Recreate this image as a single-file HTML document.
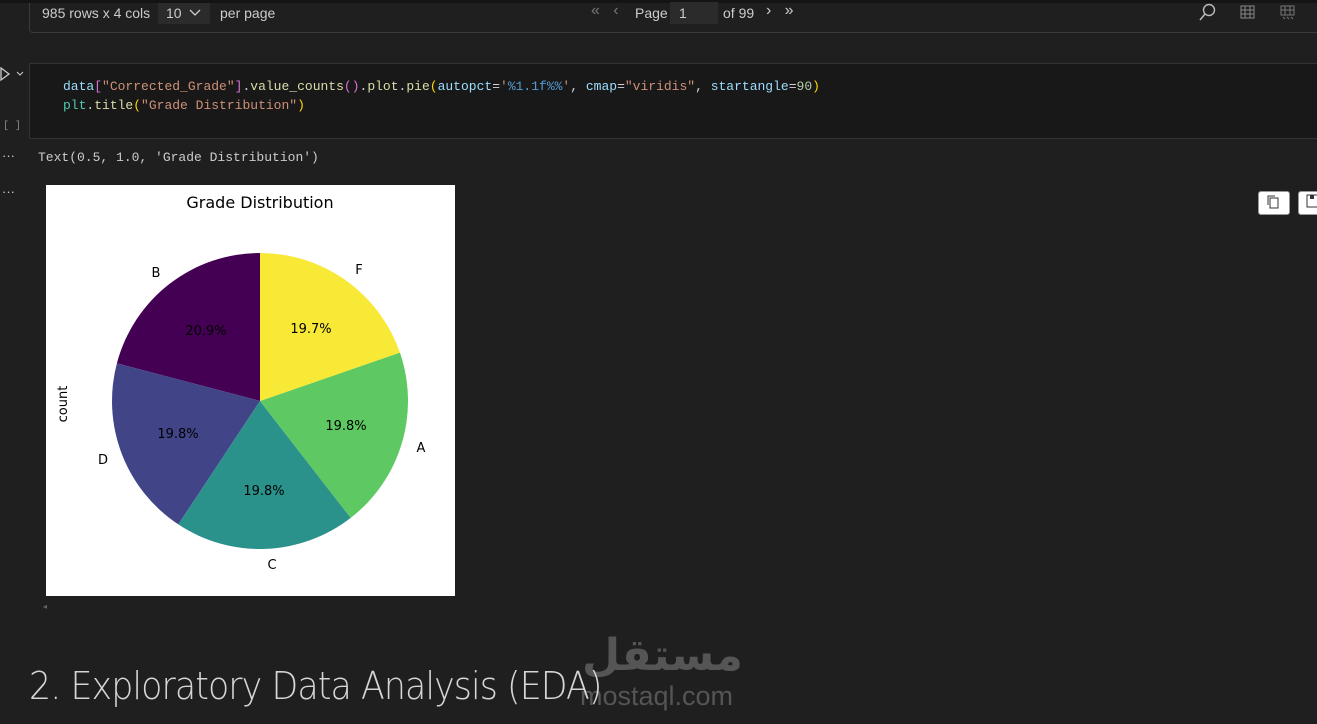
<!DOCTYPE html>
<html><head><meta charset="utf-8"><style>
body{margin:0;width:1317px;height:724px;background:#1f1f1f;overflow:hidden;position:relative;font-family:"Liberation Sans",sans-serif;color:#ccc}
.abs{position:absolute}
.mono{font-family:"Liberation Mono","DejaVu Sans Mono",monospace;font-size:13px}
</style></head><body>
<div class="abs" style="left:0;top:0;width:1317px;height:3px;background:#141414"></div>
<div class="abs" style="left:29px;top:3px;width:1300px;height:29px;border:1px solid #3a3a3a;border-top:none;border-radius:0 0 0 4px"></div>
<div class="abs" style="left:42px;top:5px;font-size:14px;color:#ccc">985 rows x 4 cols</div>
<div class="abs" style="left:158px;top:3px;width:52px;height:21px;background:#2b2b2b"></div>
<div class="abs" style="left:166px;top:5px;font-size:14px;color:#ccc">10</div>
<svg class="abs" style="left:188px;top:7px" width="14" height="10"><path d="M2 3l5 5 5-5" stroke="#ccc" fill="none" stroke-width="1.3"/></svg>
<div class="abs" style="left:220px;top:5px;font-size:14px">per page</div>
<div class="abs" style="left:591px;top:2px;font-size:16px;color:#777">«&nbsp;&nbsp; ‹</div>
<div class="abs" style="left:635px;top:5px;font-size:14px">Page</div>
<div class="abs" style="left:670px;top:2px;width:48px;height:22px;background:#2b2b2b"></div>
<div class="abs" style="left:679px;top:5px;font-size:14px">1</div>
<div class="abs" style="left:723px;top:5px;font-size:14px">of 99</div>
<div class="abs" style="left:766px;top:2px;font-size:16px;color:#ccc">›&nbsp;&nbsp; »</div>
<svg class="abs" style="left:1198px;top:2px" width="20" height="20"><circle cx="11" cy="8" r="5.5" stroke="#bbb" fill="none" stroke-width="1.4"/><path d="M7 12l-5 6" stroke="#bbb" stroke-width="1.5"/></svg>
<svg class="abs" style="left:1240px;top:5px" width="15" height="14"><rect x="1" y="1" width="13" height="12" fill="none" stroke="#888"/><path d="M1 5h13M1 9h13M5 1v12M10 1v12" stroke="#888"/></svg>
<svg class="abs" style="left:1280px;top:5px" width="16" height="16"><rect x="1" y="1" width="13" height="9" fill="none" stroke="#777"/><path d="M1 5h13M5 1v9M10 1v9M3 12l2 2M7 12l2 2M11 12l2 2" stroke="#777"/></svg>

<div class="abs" style="left:29px;top:63px;width:1300px;height:74px;background:#181818;border:1px solid #333"></div>
<svg class="abs" style="left:0;top:67px" width="28" height="16"><path d="M1 1l8 6-8 6z" stroke="#ccc" fill="none" stroke-width="1.3"/><path d="M17 5l3 3 3-3" stroke="#ccc" fill="none"/></svg>
<div class="abs mono" style="left:3px;top:121px;font-size:10px;color:#888">[ ]</div>
<div class="abs mono" style="left:63px;top:77px;line-height:19px;white-space:pre;color:#d4d4d4"><span style="color:#9cdcfe">data</span><span style="color:#da70d6">[</span><span style="color:#ce9178">"Corrected_Grade"</span><span style="color:#da70d6">]</span>.<span style="color:#dcdcaa">value_counts</span><span style="color:#da70d6">()</span>.<span style="color:#dcdcaa">plot</span>.<span style="color:#dcdcaa">pie</span><span style="color:#ffd700">(</span><span style="color:#9cdcfe">autopct</span>=<span style="color:#ce9178">'</span><span style="color:#569cd6">%1.1f%%</span><span style="color:#ce9178">'</span>, <span style="color:#9cdcfe">cmap</span>=<span style="color:#ce9178">"viridis"</span>, <span style="color:#9cdcfe">startangle</span>=<span style="color:#b5cea8">90</span><span style="color:#ffd700">)</span>
<span style="color:#4ec9b0">plt</span>.<span style="color:#dcdcaa">title</span><span style="color:#ffd700">(</span><span style="color:#ce9178">"Grade Distribution"</span><span style="color:#ffd700">)</span></div>
<div class="abs" style="left:2px;top:148px;font-size:13px;color:#ccc">···</div>
<div class="abs mono" style="left:38px;top:150px;color:#ccc">Text(0.5, 1.0, 'Grade Distribution')</div>
<div class="abs" style="left:2px;top:184px;font-size:13px;color:#ccc">···</div>

<svg class="abs" style="left:46px;top:185px" width="409" height="411" viewBox="46 185 409 411" font-family="DejaVu Sans, sans-serif" font-size="13">
<rect x="46" y="185" width="409" height="411" fill="#fff"/>
<text x="260" y="208" text-anchor="middle" font-size="16">Grade Distribution</text>
<path d="M260 401L260 253A148 148 0 0 0 116.9 363.3Z" fill="#440154"/>
<path d="M260 401L116.9 363.3A148 148 0 0 0 178.3 524.4Z" fill="#414487"/>
<path d="M260 401L178.3 524.4A148 148 0 0 0 350.7 517.9Z" fill="#2a918b"/>
<path d="M260 401L350.7 517.9A148 148 0 0 0 399.9 352.6Z" fill="#5ec962"/>
<path d="M260 401L399.9 352.6A148 148 0 0 0 260 253Z" fill="#f7e935"/>
<text x="206" y="335" text-anchor="middle">20.9%</text>
<text x="311" y="333" text-anchor="middle">19.7%</text>
<text x="346" y="430" text-anchor="middle">19.8%</text>
<text x="178" y="438" text-anchor="middle">19.8%</text>
<text x="264" y="495" text-anchor="middle">19.8%</text>
<text x="156" y="277" text-anchor="middle">B</text>
<text x="359" y="274" text-anchor="middle">F</text>
<text x="421" y="452" text-anchor="middle">A</text>
<text x="103" y="464" text-anchor="middle">D</text>
<text x="272" y="569" text-anchor="middle">C</text>
<text transform="translate(67 404) rotate(-90)" text-anchor="middle">count</text>
</svg>
<div class="abs" style="left:1258px;top:191px;width:30px;height:22px;background:#fff;border-radius:3px;border:1px solid #999"></div>
<svg class="abs" style="left:1266px;top:194px" width="14" height="16"><rect x="4" y="4" width="8" height="10" fill="none" stroke="#333"/><path d="M2 11V2h7" stroke="#333" fill="none"/></svg>
<div class="abs" style="left:1298px;top:191px;width:30px;height:22px;background:#fff;border-radius:3px;border:1px solid #999"></div>
<svg class="abs" style="left:1306px;top:194px" width="12" height="14"><rect x="1" y="1" width="11" height="12" fill="none" stroke="#333"/><rect x="4" y="1" width="4" height="4" fill="#333"/></svg>
<div class="abs" style="left:43px;top:602px;font-size:8px;color:#666">◂</div>
<div class="abs" style="left:582px;top:626px;width:155px;text-align:center;font-size:44px;line-height:60px;color:#555;font-family:'DejaVu Sans',sans-serif;font-weight:bold">مستقل</div>
<div class="abs" style="left:580px;top:681px;font-size:27px;line-height:30px;color:#555;font-family:'Liberation Sans',sans-serif">mostaql.com</div>
<div class="abs" style="left:29px;top:664px;font-size:38px;color:#d6d6d6;font-family:'DejaVu Sans',sans-serif;font-weight:300;letter-spacing:-1px;white-space:nowrap;transform:scaleX(0.915);transform-origin:left">2. Exploratory Data Analysis (EDA)</div>
</body></html>
